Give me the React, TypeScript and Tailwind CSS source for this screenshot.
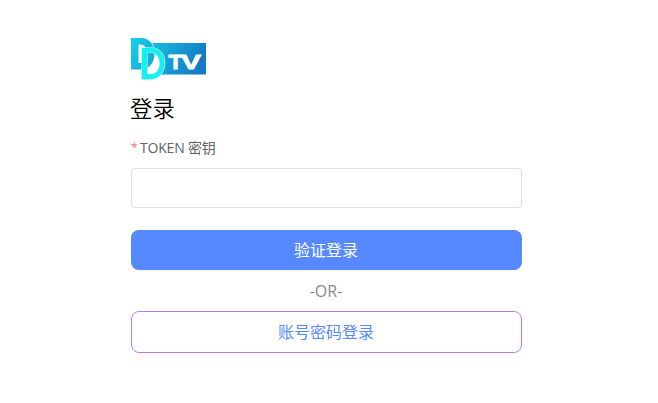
function Logo() {
  return (
    <svg className="block h-[42px] w-[75px]" viewBox="0 0 75 42" role="img" aria-label="DDTV">
      <defs>
        <linearGradient id="panel" x1="0" y1="0" x2="1" y2="0.3">
          <stop offset="0" stopColor="#16bee0" />
          <stop offset="1" stopColor="#147bc5" />
        </linearGradient>
        <linearGradient id="back" x1="0" y1="0" x2="1" y2="0.7">
          <stop offset="0" stopColor="#12d4ee" />
          <stop offset="1" stopColor="#18a5d6" />
        </linearGradient>
      </defs>
      <rect x="21" y="5" width="54" height="31.5" fill="url(#panel)" />
      <path d="M0 0H11C19 0 24 6 24 15.5S19 32 10 32H0Z" fill="white" />
      <path d="M10.5 9.5H19C29 9.5 34 16 34 25S28 41.5 19 41.5H10.5Z" fill="white" />
      <path fillRule="evenodd" d="M0 0H10C18 0 23.5 6 23.5 15.5S18 31.5 9 31.5H0Z M7.5 6.5V25H9C13.5 25 16 21.5 16 15.5S13.5 6.5 9 6.5Z" fill="url(#back)" />
      <path fillRule="evenodd" d="M10.5 9.5H19C29 9.5 34 16 34 25S28 41.5 19 41.5H10.5Z M16.5 14.5V36H19C25 36 28.5 32 28.5 25.5S25 14.5 19 14.5Z" fill="#16eff2" stroke="#c5f8fc" strokeWidth="0.5" />
      <g fill="white" stroke="white" strokeWidth="0.8" fontSize="20.5" fontWeight="700" className="font-['Liberation_Sans',sans-serif]">
        <text x="37.5" y="31.2" textLength="14" lengthAdjust="spacingAndGlyphs">T</text>
        <text x="50" y="31.2" textLength="20" lengthAdjust="spacingAndGlyphs">V</text>
      </g>
    </svg>
  );
}

export default function App() {
  return (
    <main className="flex h-[403px] w-[658px] flex-col bg-white pt-[38px] pl-[131px] font-['Open_Sans','Noto_Sans_CJK_SC',sans-serif]">
      <form className="flex w-[391px] flex-col" onSubmit={(e) => e.preventDefault()}>
        <Logo />
        <h1 className="mt-[13px] -ml-px h-8 text-[22.4px] leading-8 font-[350] text-black">登录</h1>
        <label htmlFor="token" className="mt-[13px] flex h-5 text-sm leading-5 text-[#606266]">
          <span className="w-[9px] text-xs leading-5 text-[#f56c6c]">*</span>
          <span className="tracking-[-0.2px]">TOKEN 密钥</span>
        </label>
        <input id="token" className="mt-[10px] h-10 rounded border border-[#dcdfe6] bg-white px-4 outline-none" />
        <button className="mt-[22px] h-10 rounded-lg bg-[#5689ff] pr-px text-base leading-10 text-white">验证登录</button>
        <div className="h-[41px] pr-px text-center text-base leading-[42px] text-[#888]">-OR-</div>
        <button type="button" className="h-[42px] rounded-lg border border-[#bd7be8] pr-px text-base leading-10 text-[#5689ff]">账号密码登录</button>
      </form>
    </main>
  );
}
